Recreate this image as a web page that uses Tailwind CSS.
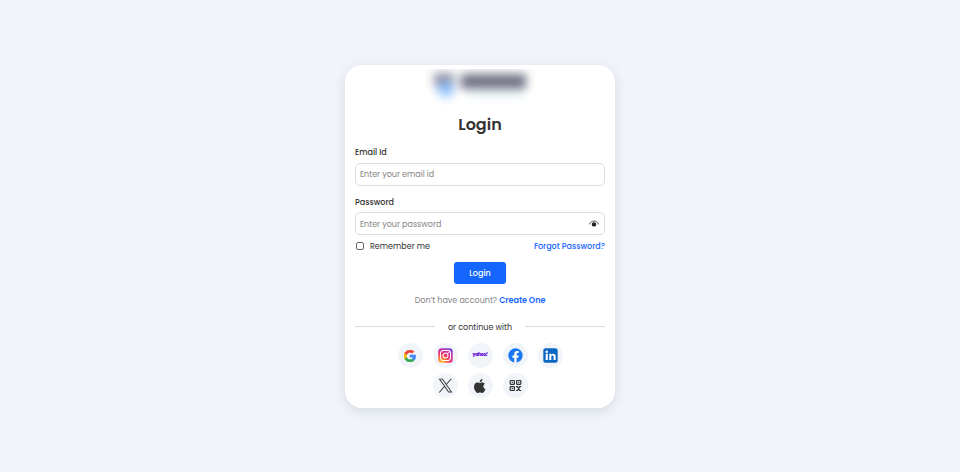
<!DOCTYPE html>
<html lang="en">
<head>
<meta charset="utf-8">
<title>Login</title>
<script src="https://cdn.jsdelivr.net/npm/@tailwindcss/browser@4"></script>
</head>
<body class="h-[473px] w-[961px] overflow-hidden bg-white font-['Poppins','Inter',sans-serif] text-[8px] leading-3 text-[#333]">
<div class="flex h-[472px] w-[960px] justify-center bg-[#f1f5fa] pt-[65px]">
  <main class="flex h-[343px] w-[270px] flex-col rounded-[17px] bg-white px-2.5 shadow-[0_3px_12px_rgba(60,80,100,0.16)]">
    <div class="flex h-[49px] justify-center pt-1">
      <svg class="h-[38px] w-[120px]" viewBox="0 0 120 38" aria-hidden="true">
        <defs><filter id="soft" filterUnits="userSpaceOnUse" x="0" y="-8" width="120" height="54" color-interpolation-filters="sRGB"><feGaussianBlur stdDeviation="4.8"/></filter></defs>
        <g filter="url(#soft)">
          <path d="M14 4h20v14H14z" fill="#65677c" opacity=".7"/>
          <circle cx="26" cy="20" r="8.500" fill="#80b8ff" opacity=".8"/>
          <path d="M41 5h65v15H41z" fill="#4d5068" opacity=".8"/>
          <path d="M49 24h53v4H49z" fill="#c6e9ed" opacity=".65"/>
        </g>
      </svg>
    </div>
    <h1 class="h-5 text-center text-[16px] leading-[21px] font-semibold">Login</h1>
    <form class="flex flex-col">
      <label for="email" class="mt-[13px] h-3 font-medium">Email Id</label>
      <input id="email" type="email" placeholder="Enter your email id" class="mt-[4px] h-[23px] w-full rounded-[5px] border border-[#ddd] px-1 pt-px placeholder:text-[#858585]">
      <label for="password" class="mt-[10px] h-3 leading-[13px] font-medium">Password</label>
      <div class="mt-[4px] flex h-[23px] items-center rounded-[5px] border border-[#ddd] px-1">
        <input id="password" type="password" placeholder="Enter your password" class="min-w-0 flex-1 pt-[3px] placeholder:text-[#858585]">
        <svg class="mr-px h-2.5 w-2.5" viewBox="0 0 10 10" fill="none"><path d="M.3 5.200C2.500.9 7.500.9 9.700 5.200" stroke="#444" stroke-width=".9" stroke-linecap="round"/><circle cx="5" cy="5.400" r="2.200" fill="#222"/></svg>
      </div>
      <div class="mt-[6px] flex h-3 items-center justify-between">
        <label class="flex items-center"><input type="checkbox" class="mr-1.5 ml-[1px] h-2 w-2 -translate-y-px appearance-none rounded-[2px] border border-[#666]">Remember me</label>
        <a href="#" class="font-medium text-[#1466ff]">Forgot Password?</a>
      </div>
      <button type="button" class="mt-[9px] h-[22px] w-[52px] self-center rounded-[3px] bg-[#1466ff] pt-[2px] font-medium text-white">Login</button>
    </form>
    <p class="mt-[11px] h-3 text-center whitespace-nowrap text-[#858585]">Don’t have account? <a href="#" class="font-semibold text-[#1466ff]">Create One</a></p>
    <div class="mt-[15px] flex h-3 items-start justify-between">
      <span class="mt-[4px] h-px w-20 bg-[#ddd]"></span><span>or continue with</span><span class="mt-[4px] h-px w-20 bg-[#ddd]"></span>
    </div>
    <div class="mx-auto mt-[9px] flex w-[165px] flex-wrap justify-center gap-x-2.5 gap-y-[5px]">
      <a href="#" aria-label="Google" class="flex size-[25px] items-center justify-center rounded-full bg-[#f1f5fa]"><svg class="size-3" viewBox="0 0 48 48"><path fill="#4285F4" stroke="#4285F4" stroke-width="2" d="M47 24.600c0-1.700-.2-3.300-.5-4.800H24v9.100h13c-.6 3-2.300 5.500-4.800 7.200v6h7.700C44.400 38 47 31.900 47 24.600"/><path fill="#34A853" stroke="#34A853" stroke-width="2" d="M24 48c6.500 0 11.900-2.100 15.900-5.900l-7.700-6c-2.100 1.400-4.900 2.300-8.200 2.300-6.200 0-11.500-4.200-13.400-9.900H2.700v6.200C6.600 42.500 14.700 48 24 48"/><path fill="#FBBC05" stroke="#FBBC05" stroke-width="2" d="M10.600 28.500a14.500 14.500 0 0 1 0-9.100v-6.200H2.700a24 24 0 0 0 0 21.500z"/><path fill="#EA4335" stroke="#EA4335" stroke-width="2" d="M24 9.500c3.500 0 6.700 1.200 9.200 3.600l6.800-6.800C35.900 2.400 30.500 0 24 0 14.700 0 6.600 5.400 2.700 13.200l7.900 6.200C12.500 13.700 17.800 9.500 24 9.500"/></svg></a>
      <a href="#" aria-label="Instagram" class="flex size-[25px] items-center justify-center rounded-full bg-[#f1f5fa]"><svg class="size-[15px]" viewBox="0 0 15 15"><defs><radialGradient id="ig" cx=".2" cy="1" r="1.2"><stop stop-color="#ffcb3d"/><stop offset=".25" stop-color="#ff7b35"/><stop offset=".55" stop-color="#eb2970"/><stop offset=".8" stop-color="#b936b7"/><stop offset="1" stop-color="#6b42df"/></radialGradient></defs><rect x=".3" y=".3" width="14.400" height="14.400" rx="3" fill="url(#ig)"/><g fill="none" stroke="#fff" stroke-width="1.050"><rect x="2.500" y="2.500" width="10" height="10" rx="2.700"/><circle cx="7.500" cy="7.500" r="2.500"/></g><circle cx="10.400" cy="4.600" r=".65" fill="#fff"/></svg></a>
      <a href="#" aria-label="Yahoo" class="flex size-[25px] items-center justify-center rounded-full bg-[#f1f5fa] text-[4.500px] leading-none font-extrabold tracking-[-0.3px] text-[#6001d2]">yahoo<i>!</i></a>
      <a href="#" aria-label="Facebook" class="flex size-[25px] items-center justify-center rounded-full bg-[#f1f5fa]"><svg class="size-[15px]" viewBox="0 0 24 24"><circle cx="12" cy="12" r="11.500" fill="#1877f2"/><path fill="#fff" d="M10 23.400v-8H7v-3.500h3V9.300c0-3 1.800-4.700 4.500-4.700 1.300 0 2.700.2 2.700.2v3h-1.500c-1.500 0-1.900.9-1.900 1.900v2.200h3.300l-.5 3.500h-2.800v8z"/></svg></a>
      <a href="#" aria-label="LinkedIn" class="flex size-[25px] items-center justify-center rounded-full bg-[#f1f5fa]"><svg class="size-[15px]" viewBox="0 0 24 24"><rect x=".5" y=".5" width="23" height="23" rx="4" fill="#0a66c2"/><g fill="#fff"><circle cx="6" cy="6" r="2"/><path d="M4.300 9.300h3.400v10H4.300zM10 9.300h3.200v1.400c.7-1.100 1.800-1.700 3.200-1.700 2.500 0 3.900 1.600 3.900 4.500v5.800h-3.400v-5.200c0-1.400-.5-2.200-1.700-2.200-1.200 0-1.900.9-1.900 2.200v5.200H10z"/></g></svg></a>
      <a href="#" aria-label="X" class="flex size-[25px] items-center justify-center rounded-full bg-[#f1f5fa]"><svg class="size-[15px]" viewBox="0 0 24 24"><path fill="#333" d="M14.100 10.300 22.300 1h-2l-7.100 8.100L7.600 1H1l8.600 12.200L1 23h2l7.500-8.500 6 8.500H23zm-2.600 3-.9-1.200L3.700 2.500h3l5.500 7.800.9 1.200 7.200 10.100h-3z"/></svg></a>
      <a href="#" aria-label="Apple" class="flex size-[25px] items-center justify-center rounded-full bg-[#f1f5fa]"><svg class="size-[16px]" viewBox="0 0 24 24" fill="#333"><path d="M17.100 12.700c0-2.600 2.100-3.900 2.200-4-1.200-1.800-3.100-2-3.800-2.100-1.600-.1-3.100 1-3.900 1-.8 0-2.100-.9-3.400-.9-1.700 0-3.400 1-4.300 2.600-1.900 3.200-.5 7.900 1.300 10.500.9 1.300 1.900 2.700 3.300 2.600 1.300 0 1.800-.8 3.400-.8s2.100.8 3.500.8c1.400 0 2.300-1.300 3.200-2.600 1-1.500 1.400-2.900 1.500-3-.1 0-3-1.200-3-4.100M14.500 5c.7-.9 1.200-2.100 1.100-3.400-1.100 0-2.400.7-3.100 1.600-.7.800-1.300 2-1.100 3.200 1.200.1 2.400-.6 3.100-1.400"/></svg></a>
      <a href="#" aria-label="QR code" class="flex size-[25px] items-center justify-center rounded-full bg-[#f1f5fa]"><svg class="size-[13px]" viewBox="0 0 13 13" fill="none" stroke="#333" stroke-width="1.200"><rect x="1.200" y="1.500" width="4.200" height="3.800" rx=".5"/><rect x="7.600" y="1.500" width="4.200" height="3.800" rx=".5"/><rect x="1.200" y="7.700" width="4.200" height="3.800" rx=".5"/><path d="M2.700 3.400h1.200M9.100 3.400h1.200M2.700 9.600h1.200M7 7.600h1.500L10.700 11.500h1.500M12.200 7.600h-1.500L8.500 11.500H7"/></svg></a>
    </div>
  </main>
</div>
</body>
</html>
